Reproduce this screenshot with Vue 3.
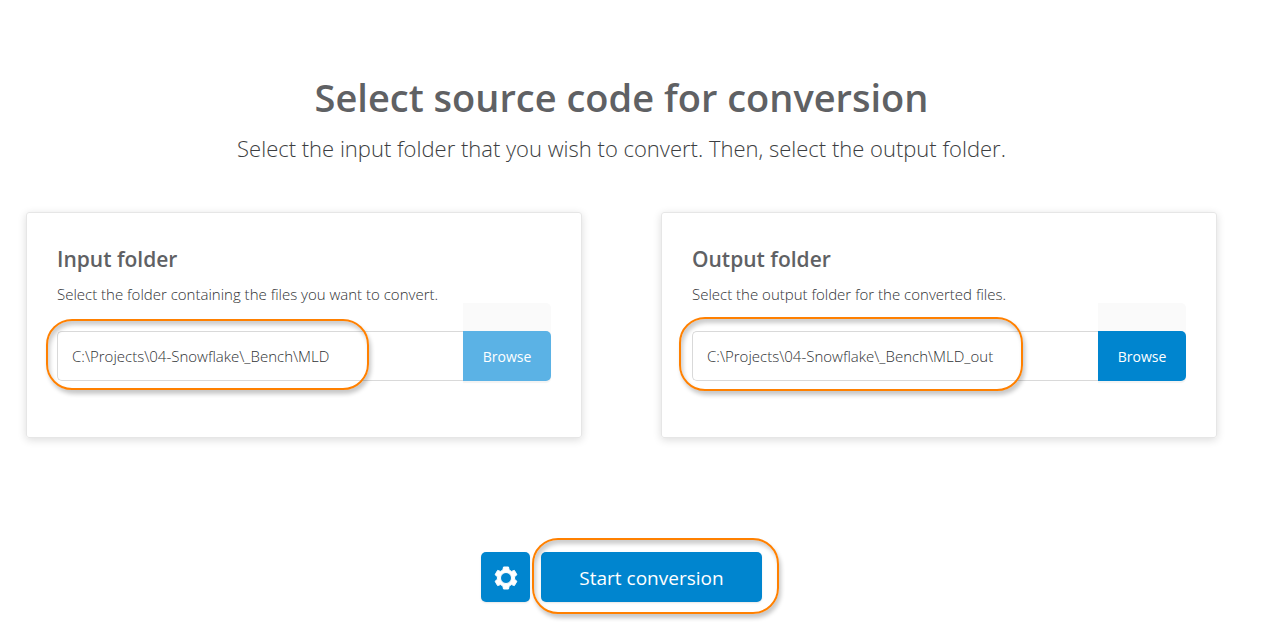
<script setup>
import { ref } from 'vue'

const folders = ref([
  {
    id: 'input',
    title: 'Input folder',
    hint: 'Select the folder containing the files you want to convert.',
    path: 'C:\\Projects\\04-Snowflake\\_Bench\\MLD',
  },
  {
    id: 'output',
    title: 'Output folder',
    hint: 'Select the output folder for the converted files.',
    path: 'C:\\Projects\\04-Snowflake\\_Bench\\MLD_out',
  },
])
</script>

<template>
  <main class="page">
    <header class="intro">
      <h1>Select source code for conversion</h1>
      <p>Select the input folder that you wish to convert. Then, select the output folder.</p>
    </header>

    <div class="cards">
      <section v-for="folder in folders" :key="folder.id" class="card">
        <h2><label :for="folder.id">{{ folder.title }}</label></h2>
        <p class="hint">{{ folder.hint }}</p>
        <div class="field">
          <input :id="folder.id" v-model="folder.path" type="text" />
          <button type="button" class="browse" :class="folder.id">Browse</button>
          <span class="callout" :class="folder.id"></span>
        </div>
      </section>
    </div>

    <div class="actions">
      <button type="button" class="action settings" aria-label="Settings">
        <svg viewBox="0 0 24 24" width="24" height="24" aria-hidden="true">
          <path
            fill="currentColor"
            fill-rule="evenodd"
            stroke="currentColor"
            stroke-width="1"
            stroke-linejoin="round"
            d="M9.500 1h5l.6 3 2.400 1.400 2.900-1 2.500 4.300-2.300 2v2.600l2.300 2-2.500 4.300-2.900-1-2.400 1.400-.6 3h-5l-.6-3-2.400-1.400-2.900 1-2.500-4.300 2.300-2v-2.600l-2.300-2 2.500-4.300 2.900 1L8.900 4zM12 6.500a5.500 5.500 0 1 0 0 11 5.500 5.500 0 1 0 0-11z"
          />
        </svg>
      </button>
      <div class="start-wrap">
        <button type="button" class="action start">Start conversion</button>
        <span class="callout begin"></span>
      </div>
    </div>
  </main>
</template>

<style>
body {
  background: #fff;
}
</style>

<style scoped>
.page {
  box-sizing: border-box;
  margin-right: 32px;
  padding: 69px 26px 31px;
  color: #5f6164;
  font-family: "Segoe UI", "Open Sans", "Noto Sans", sans-serif;
}

.intro {
  text-align: center;
}

h1 {
  margin: 0;
  font-size: 38px;
  font-weight: 600;
  line-height: 56px;
}

.intro p {
  margin: 6px 0 0;
  color: #3c3e41;
  font-size: 22px;
  font-weight: 300;
  line-height: 34px;
}

.cards {
  display: grid;
  grid-template-columns: 1fr 1fr;
  gap: 79px;
  margin-top: 47px;
}

.card {
  padding: 30px 30px 56px;
  border: 1px solid #e6e6e6;
  border-radius: 3px;
  box-shadow: 0 2px 8px rgba(0, 0, 0, 0.14);
}

h2 {
  margin: 0;
  font-size: 21px;
  font-weight: 600;
  line-height: 32px;
}

.hint {
  margin: 7px 0 25px;
  color: #303235;
  font-size: 15px;
  font-weight: 300;
  line-height: 24px;
}

.field {
  position: relative;
  display: flex;
  height: 50px;
}

input {
  box-sizing: border-box;
  flex: 1;
  min-width: 0;
  padding: 0 14px;
  border: 1px solid #d9d9d9;
  border-right: 0;
  border-radius: 5px 0 0 5px;
  background: #fff;
  color: #303235;
  font: inherit;
  font-size: 15px;
  font-weight: 300;
  outline: 0;
}

button {
  padding: 0;
  border: 0;
  color: #fff;
  font: inherit;
  cursor: pointer;
}

.browse {
  width: 88px;
  border-radius: 0 5px 5px 0;
  background: #0085cf;
  box-shadow: 0 -28px 0 #fafafa, 0 2px 1px #f3f3f3;
  font-size: 14px;
}

.browse.input {
  background: #5bb2e5;
}

.callout {
  position: absolute;
  box-sizing: border-box;
  border: 2px solid #ff8000;
  border-radius: 26px;
  box-shadow: 2px 4px 4px rgba(0, 0, 0, 0.22), inset 2px 4px 4px rgba(0, 0, 0, 0.2);
  pointer-events: none;
}

.callout.input {
  top: -12px;
  bottom: -9px;
  left: -11px;
  width: 323px;
}

.callout.output {
  top: -14px;
  bottom: -10px;
  left: -13px;
  width: 344px;
}

.callout.begin {
  top: -14px;
  right: -17px;
  bottom: -12px;
  left: -9px;
}

.actions {
  display: flex;
  justify-content: center;
  gap: 11px;
  margin-top: 114px;
}

.action {
  display: flex;
  align-items: center;
  justify-content: center;
  height: 50px;
  padding-top: 2px;
  border-radius: 5px;
  background: #0085cf;
  box-shadow: 0 1px 2px rgba(0, 0, 0, 0.1);
}

.settings {
  width: 49px;
}

.start-wrap {
  position: relative;
}

.start {
  width: 221px;
  font-size: 19px;
}
</style>
